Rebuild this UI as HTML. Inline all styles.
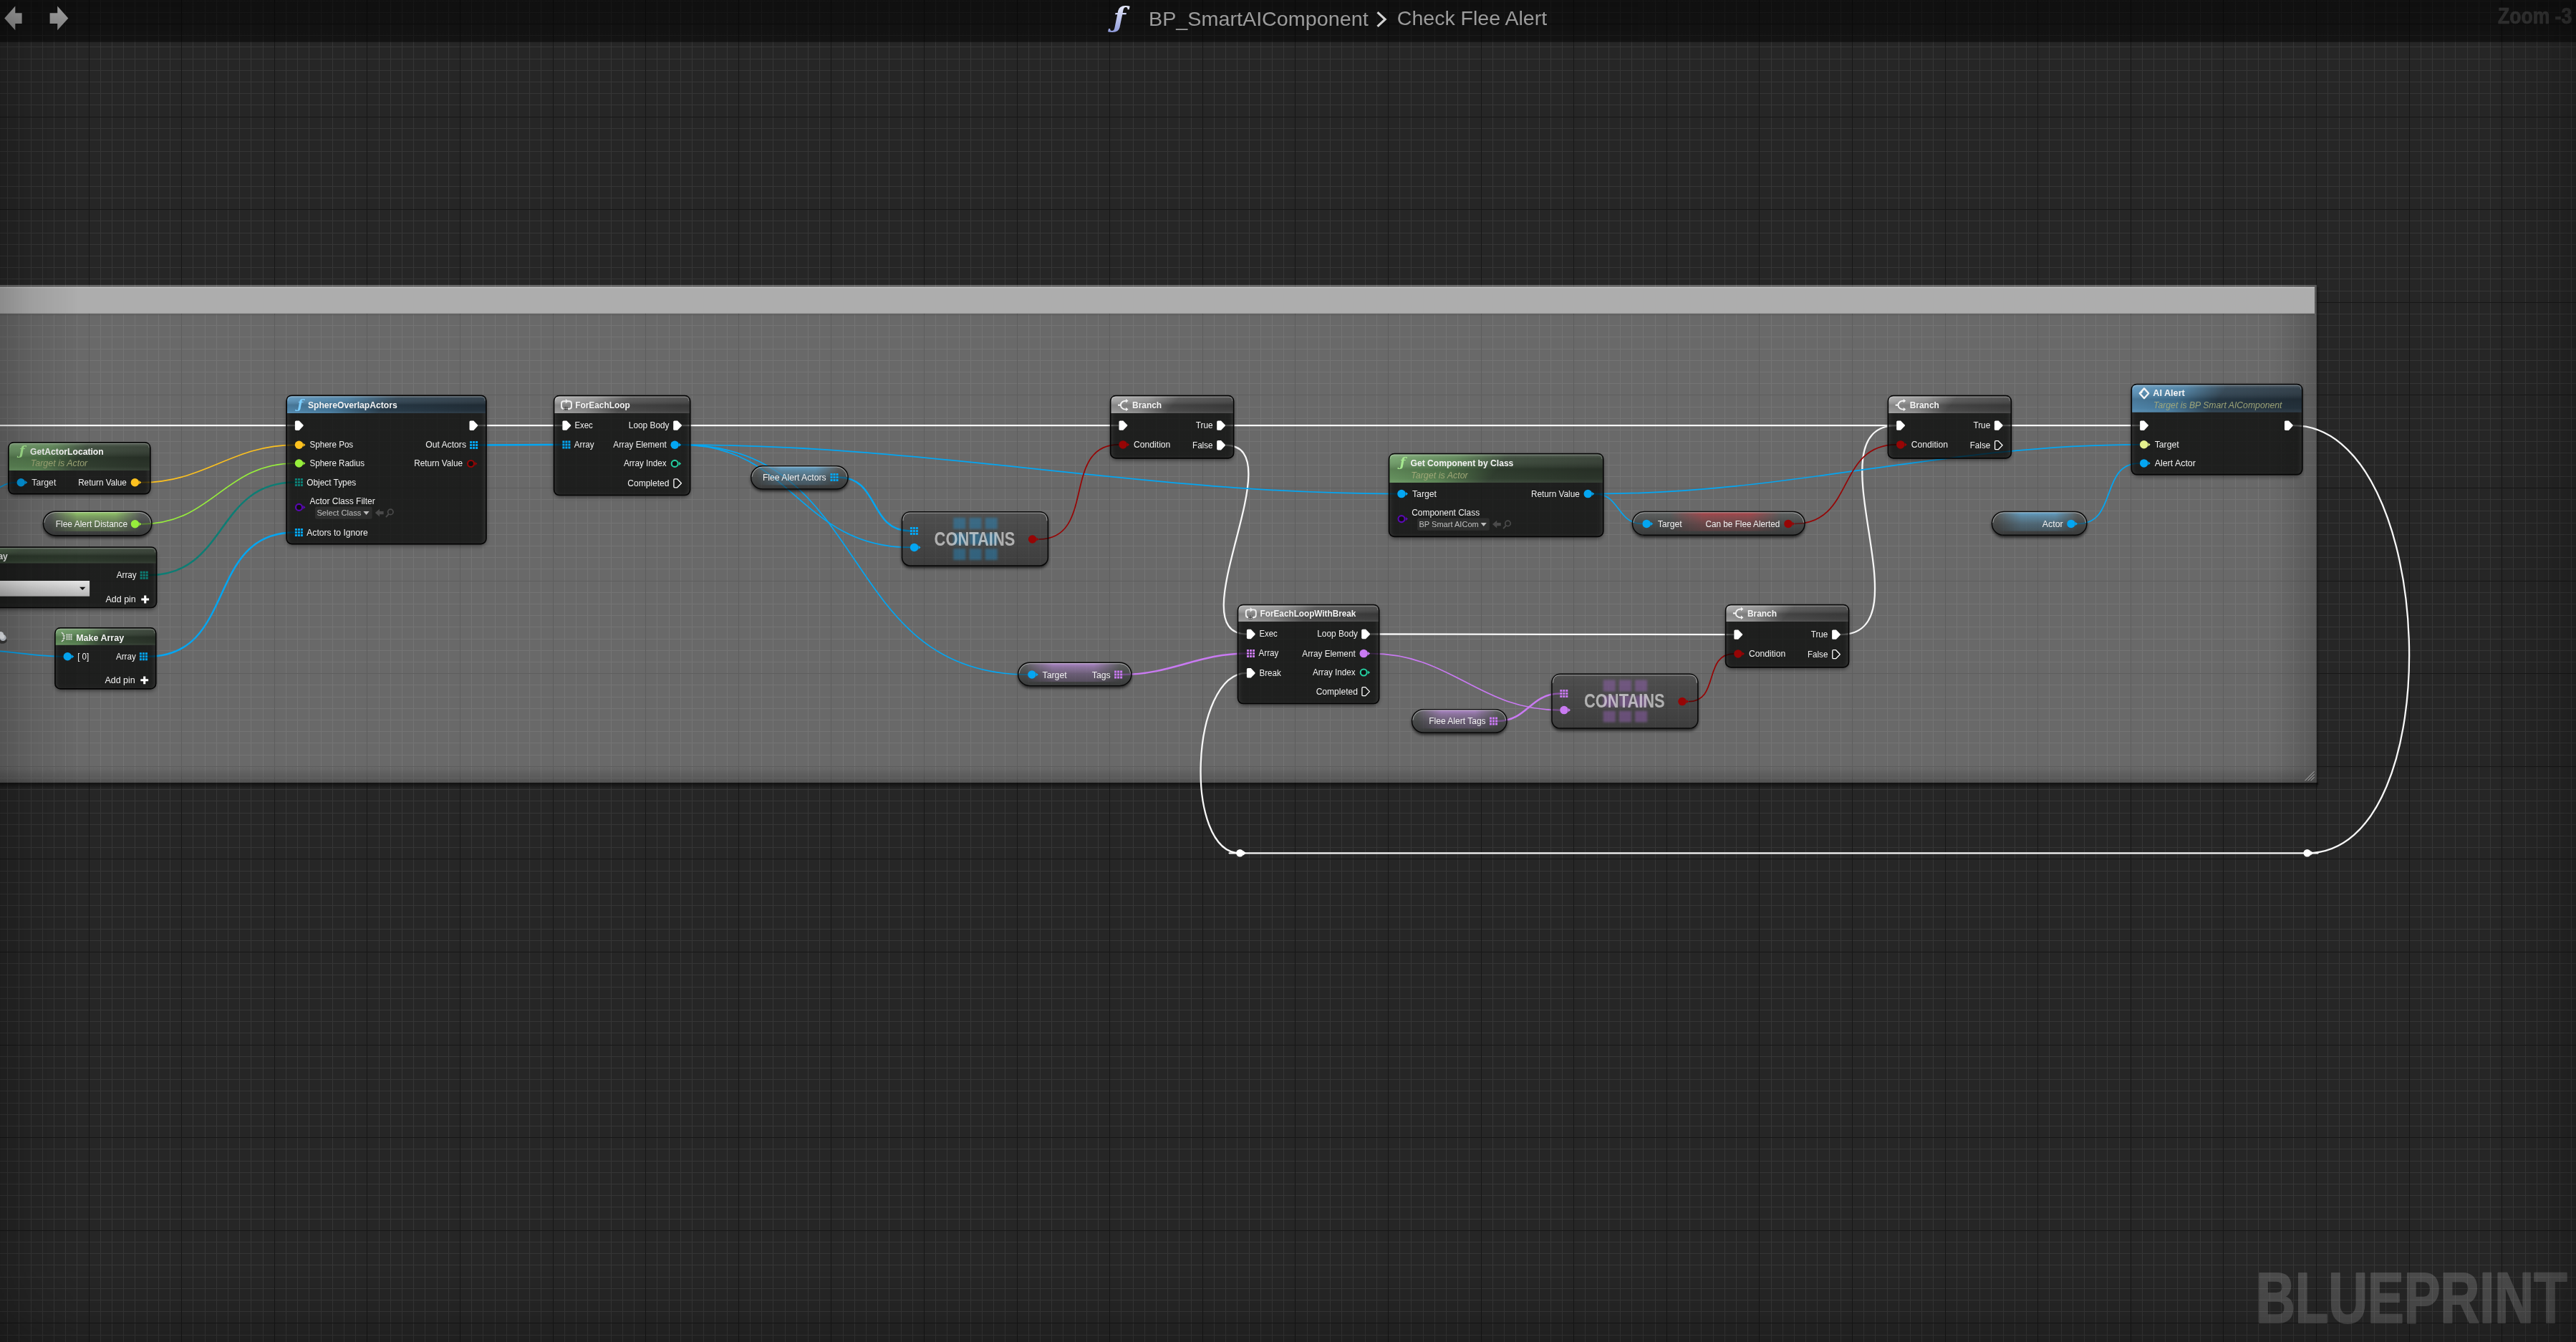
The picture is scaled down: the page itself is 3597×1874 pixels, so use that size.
<!DOCTYPE html>
<html lang="en"><head><meta charset="utf-8"><title>BP_SmartAIComponent - Check Flee Alert</title>
<style>
html,body{margin:0;padding:0;background:#262626;overflow:hidden}
body{width:3597px;height:1874px;position:relative;font-family:"Liberation Sans",sans-serif}
svg{position:absolute;left:0;top:0;display:block}
text{white-space:pre}
</style></head><body>
<svg width="3597" height="1874" viewBox="0 0 3597 1874">
<defs><filter id="blur4" x="-5%" y="-20%" width="110%" height="140%"><feGaussianBlur stdDeviation="3.2"/></filter>
<filter id="blur2" x="-20%" y="-20%" width="140%" height="140%"><feGaussianBlur stdDeviation="1.6"/></filter>
<filter id="blur3" x="-30%" y="-30%" width="160%" height="160%"><feGaussianBlur stdDeviation="2.2"/></filter>
<filter id="blur8" x="-5%" y="-5%" width="110%" height="110%"><feGaussianBlur stdDeviation="5"/></filter>
<linearGradient id="hd-blue" x1="0" y1="0" x2="1" y2="0.11"><stop offset="0" stop-color="#5a94bc"/><stop offset="0.32" stop-color="#487c9f"/><stop offset="0.56" stop-color="#2c404f"/><stop offset="1" stop-color="#26343f"/></linearGradient>
<linearGradient id="hd-green" x1="0" y1="0" x2="1" y2="0.11"><stop offset="0" stop-color="#72a26a"/><stop offset="0.32" stop-color="#5a8353"/><stop offset="0.56" stop-color="#354434"/><stop offset="1" stop-color="#2e382d"/></linearGradient>
<linearGradient id="hd-gray" x1="0" y1="0" x2="1" y2="0.11"><stop offset="0" stop-color="#a8a8a8"/><stop offset="0.32" stop-color="#8c8c8c"/><stop offset="0.56" stop-color="#505050"/><stop offset="1" stop-color="#444444"/></linearGradient>
<linearGradient id="gloss" x1="0" y1="0" x2="0" y2="1"><stop offset="0" stop-color="#fff" stop-opacity="0.20"/><stop offset="0.14" stop-color="#fff" stop-opacity="0.06"/><stop offset="0.52" stop-color="#000" stop-opacity="0.17"/><stop offset="0.86" stop-color="#000" stop-opacity="0.06"/><stop offset="1" stop-color="#fff" stop-opacity="0.04"/></linearGradient>
<linearGradient id="bodyg" x1="0" y1="0" x2="0" y2="1"><stop offset="0" stop-color="#050705" stop-opacity="0.40"/><stop offset="1" stop-color="#050705" stop-opacity="0.40"/></linearGradient>
<linearGradient id="pillg" x1="0" y1="0" x2="0" y2="1"><stop offset="0" stop-color="#5a5d5a"/><stop offset="0.5" stop-color="#434543"/><stop offset="1" stop-color="#363836"/></linearGradient>
<linearGradient id="compg2" x1="0" y1="0" x2="0" y2="1"><stop offset="0" stop-color="#3c3c3c" stop-opacity="0.50"/><stop offset="0.3" stop-color="#0a0a0a" stop-opacity="0.33"/><stop offset="1" stop-color="#000" stop-opacity="0.42"/></linearGradient>
<linearGradient id="compg" x1="0" y1="0" x2="0" y2="1"><stop offset="0" stop-color="#555555"/><stop offset="0.5" stop-color="#474747"/><stop offset="1" stop-color="#3c3c3c"/></linearGradient>
<linearGradient id="cm-sb" x1="0" y1="0" x2="0" y2="1"><stop offset="0" stop-color="#000" stop-opacity="0.55"/><stop offset="1" stop-color="#000" stop-opacity="0"/></linearGradient>
<linearGradient id="cm-sr" x1="0" y1="0" x2="1" y2="0"><stop offset="0" stop-color="#000" stop-opacity="0.35"/><stop offset="1" stop-color="#000" stop-opacity="0"/></linearGradient>
<linearGradient id="cm-r" x1="0" y1="0" x2="1" y2="0"><stop offset="0" stop-color="#000" stop-opacity="0"/><stop offset="1" stop-color="#000" stop-opacity="0.16"/></linearGradient>
<linearGradient id="cm-b" x1="0" y1="0" x2="0" y2="1"><stop offset="0" stop-color="#000" stop-opacity="0"/><stop offset="1" stop-color="#000" stop-opacity="0.22"/></linearGradient>
<linearGradient id="tb" x1="0" y1="0" x2="0" y2="1"><stop offset="0" stop-color="#000" stop-opacity="0.60"/><stop offset="1" stop-color="#000" stop-opacity="0.50"/></linearGradient>
<linearGradient id="arw" x1="0" y1="0" x2="0" y2="1"><stop offset="0" stop-color="#a4a4a4"/><stop offset="1" stop-color="#858585"/></linearGradient>
<linearGradient id="ficon" x1="0" y1="0" x2="0" y2="1"><stop offset="0" stop-color="#f2f4ff"/><stop offset="1" stop-color="#8d99da"/></linearGradient>
<linearGradient id="pillg2" x1="0" y1="0" x2="0" y2="1"><stop offset="0" stop-color="#5a5e5d" stop-opacity="0.56"/><stop offset="0.5" stop-color="#2c3030" stop-opacity="0.56"/><stop offset="1" stop-color="#181a1a" stop-opacity="0.60"/></linearGradient>
<clipPath id="pg1-o"><path clip-rule="evenodd" d="M43.7 697.5H228.6V768.4H43.7ZM77.15 714.1H195.15A16.85 16.85 0 0 1 212 730.95V730.95A16.85 16.85 0 0 1 195.15 747.8H77.15A16.85 16.85 0 0 1 60.3 730.95V730.95A16.85 16.85 0 0 1 77.15 714.1Z"/></clipPath>
<clipPath id="pg1-c"><rect x="61.2" y="715" width="149.9" height="31.9" rx="15.95"/></clipPath>
<linearGradient id="pg1-v" x1="0" y1="0" x2="0" y2="1"><stop offset="0" stop-color="#9ddc6a" stop-opacity="0.85"/><stop offset="0.22" stop-color="#9ddc6a" stop-opacity="0.55"/><stop offset="0.6" stop-color="#9ddc6a" stop-opacity="0.30"/><stop offset="1" stop-color="#9ddc6a" stop-opacity="0.20"/></linearGradient>
<linearGradient id="pg1-h" x1="0" y1="0" x2="1" y2="0"><stop offset="0" stop-color="#fff" stop-opacity="0"/><stop offset="0.30" stop-color="#fff" stop-opacity="1"/><stop offset="0.72" stop-color="#fff" stop-opacity="1"/><stop offset="1" stop-color="#fff" stop-opacity="0"/></linearGradient>
<mask id="pg1-m" maskUnits="userSpaceOnUse" x="68.87" y="713.5" width="128.44" height="34.9"><rect x="68.87" y="713.5" width="128.44" height="34.9" fill="url(#pg1-h)"/></mask>
<linearGradient id="ddg" x1="0" y1="0" x2="0" y2="1"><stop offset="0" stop-color="#e6e6e6"/><stop offset="1" stop-color="#b4b4b4"/></linearGradient>
<clipPath id="pg2-o"><path clip-rule="evenodd" d="M1032 634H1200.8V703.6H1032ZM1064.8 650.6H1168A16.2 16.2 0 0 1 1184.2 666.8V666.8A16.2 16.2 0 0 1 1168 683H1064.8A16.2 16.2 0 0 1 1048.6 666.8V666.8A16.2 16.2 0 0 1 1064.8 650.6Z"/></clipPath>
<clipPath id="pg2-c"><rect x="1049.5" y="651.5" width="133.8" height="30.6" rx="15.3"/></clipPath>
<linearGradient id="pg2-v" x1="0" y1="0" x2="0" y2="1"><stop offset="0" stop-color="#62addb" stop-opacity="0.85"/><stop offset="0.22" stop-color="#62addb" stop-opacity="0.55"/><stop offset="0.6" stop-color="#62addb" stop-opacity="0.30"/><stop offset="1" stop-color="#62addb" stop-opacity="0.20"/></linearGradient>
<linearGradient id="pg2-h" x1="0" y1="0" x2="1" y2="0"><stop offset="0" stop-color="#fff" stop-opacity="0"/><stop offset="0.30" stop-color="#fff" stop-opacity="1"/><stop offset="0.72" stop-color="#fff" stop-opacity="1"/><stop offset="1" stop-color="#fff" stop-opacity="0"/></linearGradient>
<mask id="pg2-m" maskUnits="userSpaceOnUse" x="1056.21" y="650" width="114.91" height="33.6"><rect x="1056.21" y="650" width="114.91" height="33.6" fill="url(#pg2-h)"/></mask>
<clipPath id="cp1-o"><path clip-rule="evenodd" d="M1242.8 698H1480.1V810.7H1242.8ZM1271 714.6H1451.9A11.6 11.6 0 0 1 1463.5 726.2V778.5A11.6 11.6 0 0 1 1451.9 790.1H1271A11.6 11.6 0 0 1 1259.4 778.5V726.2A11.6 11.6 0 0 1 1271 714.6Z"/></clipPath>
<clipPath id="pg3-o"><path clip-rule="evenodd" d="M2262.7 697.8H2536.8V768H2262.7ZM2295.8 714.4H2503.7A16.5 16.5 0 0 1 2520.2 730.9V730.9A16.5 16.5 0 0 1 2503.7 747.4H2295.8A16.5 16.5 0 0 1 2279.3 730.9V730.9A16.5 16.5 0 0 1 2295.8 714.4Z"/></clipPath>
<clipPath id="pg3-c"><rect x="2280.2" y="715.3" width="239.1" height="31.2" rx="15.6"/></clipPath>
<linearGradient id="pg3-v" x1="0" y1="0" x2="0" y2="1"><stop offset="0" stop-color="#b84046" stop-opacity="0.85"/><stop offset="0.22" stop-color="#b84046" stop-opacity="0.55"/><stop offset="0.6" stop-color="#b84046" stop-opacity="0.30"/><stop offset="1" stop-color="#b84046" stop-opacity="0.20"/></linearGradient>
<linearGradient id="pg3-h" x1="0" y1="0" x2="1" y2="0"><stop offset="0" stop-color="#fff" stop-opacity="0"/><stop offset="0.30" stop-color="#fff" stop-opacity="1"/><stop offset="0.72" stop-color="#fff" stop-opacity="1"/><stop offset="1" stop-color="#fff" stop-opacity="0"/></linearGradient>
<mask id="pg3-m" maskUnits="userSpaceOnUse" x="2331.96" y="713.8" width="154.94" height="34.2"><rect x="2331.96" y="713.8" width="154.94" height="34.2" fill="url(#pg3-h)"/></mask>
<clipPath id="pg4-o"><path clip-rule="evenodd" d="M2764.7 697.8H2930.6V768H2764.7ZM2797.8 714.4H2897.5A16.5 16.5 0 0 1 2914 730.9V730.9A16.5 16.5 0 0 1 2897.5 747.4H2797.8A16.5 16.5 0 0 1 2781.3 730.9V730.9A16.5 16.5 0 0 1 2797.8 714.4Z"/></clipPath>
<clipPath id="pg4-c"><rect x="2782.2" y="715.3" width="130.9" height="31.2" rx="15.6"/></clipPath>
<linearGradient id="pg4-v" x1="0" y1="0" x2="0" y2="1"><stop offset="0" stop-color="#62addb" stop-opacity="0.85"/><stop offset="0.22" stop-color="#62addb" stop-opacity="0.55"/><stop offset="0.6" stop-color="#62addb" stop-opacity="0.30"/><stop offset="1" stop-color="#62addb" stop-opacity="0.20"/></linearGradient>
<linearGradient id="pg4-h" x1="0" y1="0" x2="1" y2="0"><stop offset="0" stop-color="#fff" stop-opacity="0"/><stop offset="0.30" stop-color="#fff" stop-opacity="1"/><stop offset="0.72" stop-color="#fff" stop-opacity="1"/><stop offset="1" stop-color="#fff" stop-opacity="0"/></linearGradient>
<mask id="pg4-m" maskUnits="userSpaceOnUse" x="2788.73" y="713.8" width="112.48" height="34.2"><rect x="2788.73" y="713.8" width="112.48" height="34.2" fill="url(#pg4-h)"/></mask>
<clipPath id="pg5-o"><path clip-rule="evenodd" d="M1404.9 908.6H1596.6V978.3H1404.9ZM1437.75 925.2H1563.75A16.25 16.25 0 0 1 1580 941.45V941.45A16.25 16.25 0 0 1 1563.75 957.7H1437.75A16.25 16.25 0 0 1 1421.5 941.45V941.45A16.25 16.25 0 0 1 1437.75 925.2Z"/></clipPath>
<clipPath id="pg5-c"><rect x="1422.4" y="926.1" width="156.7" height="30.7" rx="15.35"/></clipPath>
<linearGradient id="pg5-v" x1="0" y1="0" x2="0" y2="1"><stop offset="0" stop-color="#b98bd8" stop-opacity="0.85"/><stop offset="0.22" stop-color="#b98bd8" stop-opacity="0.55"/><stop offset="0.6" stop-color="#b98bd8" stop-opacity="0.30"/><stop offset="1" stop-color="#b98bd8" stop-opacity="0.20"/></linearGradient>
<linearGradient id="pg5-h" x1="0" y1="0" x2="1" y2="0"><stop offset="0" stop-color="#fff" stop-opacity="0"/><stop offset="0.30" stop-color="#fff" stop-opacity="1"/><stop offset="0.72" stop-color="#fff" stop-opacity="1"/><stop offset="1" stop-color="#fff" stop-opacity="0"/></linearGradient>
<mask id="pg5-m" maskUnits="userSpaceOnUse" x="1430.48" y="924.6" width="134.15" height="33.7"><rect x="1430.48" y="924.6" width="134.15" height="33.7" fill="url(#pg5-h)"/></mask>
<clipPath id="pg6-o"><path clip-rule="evenodd" d="M1954.8 973.9H2120.7V1043.6H1954.8ZM1987.65 990.5H2087.85A16.25 16.25 0 0 1 2104.1 1006.75V1006.75A16.25 16.25 0 0 1 2087.85 1023H1987.65A16.25 16.25 0 0 1 1971.4 1006.75V1006.75A16.25 16.25 0 0 1 1987.65 990.5Z"/></clipPath>
<clipPath id="pg6-c"><rect x="1972.3" y="991.4" width="130.9" height="30.7" rx="15.35"/></clipPath>
<linearGradient id="pg6-v" x1="0" y1="0" x2="0" y2="1"><stop offset="0" stop-color="#b98bd8" stop-opacity="0.85"/><stop offset="0.22" stop-color="#b98bd8" stop-opacity="0.55"/><stop offset="0.6" stop-color="#b98bd8" stop-opacity="0.30"/><stop offset="1" stop-color="#b98bd8" stop-opacity="0.20"/></linearGradient>
<linearGradient id="pg6-h" x1="0" y1="0" x2="1" y2="0"><stop offset="0" stop-color="#fff" stop-opacity="0"/><stop offset="0.30" stop-color="#fff" stop-opacity="1"/><stop offset="0.72" stop-color="#fff" stop-opacity="1"/><stop offset="1" stop-color="#fff" stop-opacity="0"/></linearGradient>
<mask id="pg6-m" maskUnits="userSpaceOnUse" x="1978.83" y="989.9" width="112.48" height="33.7"><rect x="1978.83" y="989.9" width="112.48" height="33.7" fill="url(#pg6-h)"/></mask>
<clipPath id="cp2-o"><path clip-rule="evenodd" d="M2150.2 924.6H2387.6V1037.8H2150.2ZM2178.4 941.2H2359.4A11.6 11.6 0 0 1 2371 952.8V1005.6A11.6 11.6 0 0 1 2359.4 1017.2H2178.4A11.6 11.6 0 0 1 2166.8 1005.6V952.8A11.6 11.6 0 0 1 2178.4 941.2Z"/></clipPath>
<linearGradient id="vl" x1="0" y1="0" x2="1" y2="0"><stop offset="0" stop-color="#000" stop-opacity="0.19"/><stop offset="0.4" stop-color="#000" stop-opacity="0.08"/><stop offset="1" stop-color="#000" stop-opacity="0"/></linearGradient>
<linearGradient id="vr" x1="1" y1="0" x2="0" y2="0"><stop offset="0" stop-color="#000" stop-opacity="0.19"/><stop offset="0.4" stop-color="#000" stop-opacity="0.08"/><stop offset="1" stop-color="#000" stop-opacity="0"/></linearGradient>
<linearGradient id="vb" x1="0" y1="1" x2="0" y2="0"><stop offset="0" stop-color="#000" stop-opacity="0.17"/><stop offset="0.4" stop-color="#000" stop-opacity="0.07"/><stop offset="1" stop-color="#000" stop-opacity="0"/></linearGradient></defs>
<g id="L-bg">
<rect width="3597" height="1874" fill="#262626"/>
<path d="M10.5 0V1874M26.5 0V1874M43.5 0V1874M59.5 0V1874M75.5 0V1874M91.5 0V1874M107.5 0V1874M140.5 0V1874M156.5 0V1874M172.5 0V1874M188.5 0V1874M205.5 0V1874M221.5 0V1874M237.5 0V1874M269.5 0V1874M286.5 0V1874M302.5 0V1874M318.5 0V1874M334.5 0V1874M350.5 0V1874M367.5 0V1874M399.5 0V1874M415.5 0V1874M431.5 0V1874M448.5 0V1874M464.5 0V1874M480.5 0V1874M496.5 0V1874M529.5 0V1874M545.5 0V1874M561.5 0V1874M577.5 0V1874M593.5 0V1874M610.5 0V1874M626.5 0V1874M658.5 0V1874M674.5 0V1874M691.5 0V1874M707.5 0V1874M723.5 0V1874M739.5 0V1874M755.5 0V1874M788.5 0V1874M804.5 0V1874M820.5 0V1874M836.5 0V1874M853.5 0V1874M869.5 0V1874M885.5 0V1874M917.5 0V1874M934.5 0V1874M950.5 0V1874M966.5 0V1874M982.5 0V1874M998.5 0V1874M1015.5 0V1874M1047.5 0V1874M1063.5 0V1874M1079.5 0V1874M1096.5 0V1874M1112.5 0V1874M1128.5 0V1874M1144.5 0V1874M1177.5 0V1874M1193.5 0V1874M1209.5 0V1874M1225.5 0V1874M1241.5 0V1874M1258.5 0V1874M1274.5 0V1874M1306.5 0V1874M1322.5 0V1874M1339.5 0V1874M1355.5 0V1874M1371.5 0V1874M1387.5 0V1874M1403.5 0V1874M1436.5 0V1874M1452.5 0V1874M1468.5 0V1874M1484.5 0V1874M1501.5 0V1874M1517.5 0V1874M1533.5 0V1874M1565.5 0V1874M1582.5 0V1874M1598.5 0V1874M1614.5 0V1874M1630.5 0V1874M1646.5 0V1874M1663.5 0V1874M1695.5 0V1874M1711.5 0V1874M1727.5 0V1874M1744.5 0V1874M1760.5 0V1874M1776.5 0V1874M1792.5 0V1874M1825.5 0V1874M1841.5 0V1874M1857.5 0V1874M1873.5 0V1874M1889.5 0V1874M1906.5 0V1874M1922.5 0V1874M1954.5 0V1874M1970.5 0V1874M1987.5 0V1874M2003.5 0V1874M2019.5 0V1874M2035.5 0V1874M2051.5 0V1874M2084.5 0V1874M2100.5 0V1874M2116.5 0V1874M2132.5 0V1874M2149.5 0V1874M2165.5 0V1874M2181.5 0V1874M2213.5 0V1874M2230.5 0V1874M2246.5 0V1874M2262.5 0V1874M2278.5 0V1874M2294.5 0V1874M2311.5 0V1874M2343.5 0V1874M2359.5 0V1874M2375.5 0V1874M2392.5 0V1874M2408.5 0V1874M2424.5 0V1874M2440.5 0V1874M2473.5 0V1874M2489.5 0V1874M2505.5 0V1874M2521.5 0V1874M2537.5 0V1874M2554.5 0V1874M2570.5 0V1874M2602.5 0V1874M2618.5 0V1874M2635.5 0V1874M2651.5 0V1874M2667.5 0V1874M2683.5 0V1874M2699.5 0V1874M2732.5 0V1874M2748.5 0V1874M2764.5 0V1874M2780.5 0V1874M2797.5 0V1874M2813.5 0V1874M2829.5 0V1874M2861.5 0V1874M2878.5 0V1874M2894.5 0V1874M2910.5 0V1874M2926.5 0V1874M2942.5 0V1874M2959.5 0V1874M2991.5 0V1874M3007.5 0V1874M3023.5 0V1874M3040.5 0V1874M3056.5 0V1874M3072.5 0V1874M3088.5 0V1874M3121.5 0V1874M3137.5 0V1874M3153.5 0V1874M3169.5 0V1874M3185.5 0V1874M3202.5 0V1874M3218.5 0V1874M3250.5 0V1874M3266.5 0V1874M3283.5 0V1874M3299.5 0V1874M3315.5 0V1874M3331.5 0V1874M3347.5 0V1874M3380.5 0V1874M3396.5 0V1874M3412.5 0V1874M3428.5 0V1874M3445.5 0V1874M3461.5 0V1874M3477.5 0V1874M3509.5 0V1874M3526.5 0V1874M3542.5 0V1874M3558.5 0V1874M3574.5 0V1874M3590.5 0V1874M0 1.5H3597M0 17.5H3597M0 49.5H3597M0 65.5H3597M0 82.5H3597M0 98.5H3597M0 114.5H3597M0 130.5H3597M0 146.5H3597M0 179.5H3597M0 195.5H3597M0 211.5H3597M0 227.5H3597M0 244.5H3597M0 260.5H3597M0 276.5H3597M0 308.5H3597M0 325.5H3597M0 341.5H3597M0 357.5H3597M0 373.5H3597M0 389.5H3597M0 406.5H3597M0 438.5H3597M0 454.5H3597M0 470.5H3597M0 487.5H3597M0 503.5H3597M0 519.5H3597M0 535.5H3597M0 568.5H3597M0 584.5H3597M0 600.5H3597M0 616.5H3597M0 632.5H3597M0 649.5H3597M0 665.5H3597M0 697.5H3597M0 713.5H3597M0 730.5H3597M0 746.5H3597M0 762.5H3597M0 778.5H3597M0 794.5H3597M0 827.5H3597M0 843.5H3597M0 859.5H3597M0 875.5H3597M0 892.5H3597M0 908.5H3597M0 924.5H3597M0 956.5H3597M0 973.5H3597M0 989.5H3597M0 1005.5H3597M0 1021.5H3597M0 1037.5H3597M0 1054.5H3597M0 1086.5H3597M0 1102.5H3597M0 1118.5H3597M0 1135.5H3597M0 1151.5H3597M0 1167.5H3597M0 1183.5H3597M0 1216.5H3597M0 1232.5H3597M0 1248.5H3597M0 1264.5H3597M0 1280.5H3597M0 1297.5H3597M0 1313.5H3597M0 1345.5H3597M0 1361.5H3597M0 1378.5H3597M0 1394.5H3597M0 1410.5H3597M0 1426.5H3597M0 1442.5H3597M0 1475.5H3597M0 1491.5H3597M0 1507.5H3597M0 1523.5H3597M0 1540.5H3597M0 1556.5H3597M0 1572.5H3597M0 1604.5H3597M0 1621.5H3597M0 1637.5H3597M0 1653.5H3597M0 1669.5H3597M0 1685.5H3597M0 1702.5H3597M0 1734.5H3597M0 1750.5H3597M0 1766.5H3597M0 1783.5H3597M0 1799.5H3597M0 1815.5H3597M0 1831.5H3597M0 1864.5H3597" stroke="#363636" stroke-width="1" fill="none" shape-rendering="crispEdges"/>
<path d="M124.5 0V1874M253.5 0V1874M383.5 0V1874M512.5 0V1874M642.5 0V1874M772.5 0V1874M901.5 0V1874M1031.5 0V1874M1160.5 0V1874M1290.5 0V1874M1420.5 0V1874M1549.5 0V1874M1679.5 0V1874M1808.5 0V1874M1938.5 0V1874M2068.5 0V1874M2197.5 0V1874M2327.5 0V1874M2456.5 0V1874M2586.5 0V1874M2716.5 0V1874M2845.5 0V1874M2975.5 0V1874M3104.5 0V1874M3234.5 0V1874M3364.5 0V1874M3493.5 0V1874M0 33.5H3597M0 163.5H3597M0 292.5H3597M0 422.5H3597M0 551.5H3597M0 681.5H3597M0 811.5H3597M0 940.5H3597M0 1070.5H3597M0 1199.5H3597M0 1329.5H3597M0 1459.5H3597M0 1588.5H3597M0 1718.5H3597M0 1847.5H3597" stroke="#171717" stroke-width="1" fill="none" shape-rendering="crispEdges"/>
</g>
<g id="L-comment">
<rect x="-5" y="1092.9" width="3241.9" height="9" fill="url(#cm-sb)"/>
<rect x="3234.9" y="400.9" width="5" height="695" fill="url(#cm-sr)"/>
<rect x="-5" y="397.9" width="3239.9" height="695" fill="#fff" fill-opacity="0.31"/>
<rect x="3174.9" y="397.9" width="60" height="695" fill="url(#cm-r)"/>
<rect x="-5" y="1070.9" width="3239.9" height="22" fill="url(#cm-b)"/>
<rect x="-5" y="400.9" width="3237" height="36.9" fill="#adadad"/>
<rect x="-5" y="400.9" width="3237" height="1.2" fill="#c9c9c9"/>
<rect x="-5" y="437.8" width="3237" height="2.5" fill="#000" fill-opacity="0.10"/>
<path d="M3218.5 1090.2L3231.5 1077.2" stroke="#c8c8c8" stroke-width="0.9" stroke-opacity="0.9"/>
<path d="M3222.5 1090.2L3231.5 1081.2" stroke="#c8c8c8" stroke-width="0.9" stroke-opacity="0.9"/>
<path d="M3226.5 1090.2L3231.5 1085.2" stroke="#c8c8c8" stroke-width="0.9" stroke-opacity="0.9"/>
</g>
<g id="L-topbar" opacity="0.999">
<rect x="0" y="0" width="3597" height="58.7" fill="url(#tb)"/>
<path d="M6.2 25.4L21.3 8.5V18.3H30.6V32.9H21.3V42.2Z" fill="url(#arw)"/>
<path d="M95.3 25.4L80.2 8.5V18.3H69.6V32.9H80.2V42.2Z" fill="url(#arw)"/>
<text x="0" y="0" transform="translate(1554.5 37.2) scale(1.1 1)" font-family='"DejaVu Serif", serif' font-size="36.6" font-weight="bold" font-style="italic" fill="url(#ficon)">ƒ</text>
<text x="1604" y="36.2" font-family='"Liberation Sans", sans-serif' font-size="28.46" fill="#9c9c9c" textLength="306.7" lengthAdjust="spacingAndGlyphs">BP_SmartAIComponent</text>
<path d="M1923.5 17.2L1934.2 27L1923.5 36.8" stroke="#d2d2d2" stroke-width="3.1" fill="none" stroke-linejoin="miter"/>
<text x="1950.8" y="34.8" font-family='"Liberation Sans", sans-serif' font-size="28.46" fill="#9c9c9c" textLength="209.3" lengthAdjust="spacingAndGlyphs">Check Flee Alert</text>
<g opacity="0.125"><text x="3488" y="32.6" font-family='"Liberation Sans", sans-serif' font-size="31.01" font-weight="bold" fill="#ffffff" textLength="103.2" lengthAdjust="spacingAndGlyphs" stroke="#fff" stroke-width="0.7">Zoom -3</text></g>
</g>
<g id="L-wires">
<path d="M-40 594.2C110.63 594.2 261.27 594.2 411.9 594.2" fill="none" stroke="#f7f7f7" stroke-width="2.3" stroke-linecap="butt"/>
<path d="M667.5 594.2C706.83 594.2 746.07 594.1 785.4 594.1" fill="none" stroke="#f7f7f7" stroke-width="2.3" stroke-linecap="butt"/>
<path d="M952.2 594.1C1155.63 594.1 1359.07 594.1 1562.5 594.1" fill="none" stroke="#f7f7f7" stroke-width="2.3" stroke-linecap="butt"/>
<path d="M1711.2 594.1C2023.53 594.1 2335.87 594.1 2648.2 594.1" fill="none" stroke="#f7f7f7" stroke-width="2.3" stroke-linecap="butt"/>
<path d="M2796.9 594.1C2860.67 594.1 2924.33 594.2 2988.1 594.2" fill="none" stroke="#f7f7f7" stroke-width="2.3" stroke-linecap="butt"/>
<path d="M1711.2 621.7C1809.03 621.7 1643.07 885.5 1740.9 885.5" fill="none" stroke="#f7f7f7" stroke-width="2.3" stroke-linecap="butt"/>
<path d="M1913.2 885.5C2082.8 885.5 2251.8 886.1 2421.4 886.1" fill="none" stroke="#f7f7f7" stroke-width="2.3" stroke-linecap="butt"/>
<path d="M2570.1 886.1C2693.47 886.1 2524.83 594.1 2648.2 594.1" fill="none" stroke="#f7f7f7" stroke-width="2.3" stroke-linecap="butt"/>
<path d="M3202 594.2C3404.52 594.2 3424.22 1191.3 3221.7 1191.3" fill="none" stroke="#f7f7f7" stroke-width="2.3" stroke-linecap="butt"/>
<path d="M3221.7 1191.3C3421.7 1191.3 1531.4 1191.3 1731.4 1191.3" fill="none" stroke="#f7f7f7" stroke-width="2.3" stroke-linecap="butt"/>
<path d="M1731.4 1191.3C1652.23 1191.3 1661.73 939.8 1740.9 939.8" fill="none" stroke="#f7f7f7" stroke-width="2.3" stroke-linecap="butt"/>
<path d="M-60 728C-14 728 -22.3 673.7 23.7 673.7" fill="none" stroke="#0396dd" stroke-width="1.72" stroke-linecap="butt"/>
<path d="M197.4 673.7C286.37 673.7 322.93 621.3 411.9 621.3" fill="none" stroke="#fcc11f" stroke-width="1.72" stroke-linecap="butt"/>
<path d="M197.5 731.8C297.23 731.8 312.17 647 411.9 647" fill="none" stroke="#97ee3c" stroke-width="1.72" stroke-linecap="butt"/>
<path d="M206.7 803.3C318.33 803.3 300.27 673.6 411.9 673.6" fill="none" stroke="#0d7d74" stroke-width="2.5" stroke-linecap="butt"/>
<path d="M205.9 916.8C332.3 916.8 285.5 743.6 411.9 743.6" fill="none" stroke="#04a6f2" stroke-width="2.5" stroke-linecap="butt"/>
<path d="M-30 908C12.5 908 46.2 916.8 88.7 916.8" fill="none" stroke="#04a6f2" stroke-width="1.72" stroke-linecap="butt"/>
<path d="M667.1 621.5C706.7 621.5 745.8 621 785.4 621" fill="none" stroke="#04a6f2" stroke-width="2.5" stroke-linecap="butt"/>
<path d="M951.2 621.2C1105.53 621.2 1116.67 764.4 1271 764.4" fill="none" stroke="#04a6f2" stroke-width="1.72" stroke-linecap="butt"/>
<path d="M951.2 621.2C1307.4 621.2 1595.2 689.6 1951.4 689.6" fill="none" stroke="#04a6f2" stroke-width="1.72" stroke-linecap="butt"/>
<path d="M951.2 621.2C1219.5 621.2 1167 942 1435.3 942" fill="none" stroke="#04a6f2" stroke-width="1.72" stroke-linecap="butt"/>
<path d="M1170.5 666.4C1228.97 666.4 1212.43 741.4 1270.9 741.4" fill="none" stroke="#04a6f2" stroke-width="2.5" stroke-linecap="butt"/>
<path d="M1450.6 753C1531.93 753 1481.17 620.9 1562.5 620.9" fill="none" stroke="#960505" stroke-width="1.72" stroke-linecap="butt"/>
<path d="M2226.3 689.6C2262.67 689.6 2257.23 731.4 2293.6 731.4" fill="none" stroke="#04a6f2" stroke-width="1.72" stroke-linecap="butt"/>
<path d="M2226.3 689.6C2503.17 689.6 2711.23 620.8 2988.1 620.8" fill="none" stroke="#04a6f2" stroke-width="1.72" stroke-linecap="butt"/>
<path d="M2506 731.4C2590.23 731.4 2563.97 620.9 2648.2 620.9" fill="none" stroke="#960505" stroke-width="1.72" stroke-linecap="butt"/>
<path d="M2901 731.4C2958.2 731.4 2930.9 646.9 2988.1 646.9" fill="none" stroke="#04a6f2" stroke-width="1.72" stroke-linecap="butt"/>
<path d="M1567.1 942C1634.93 942 1673.17 912.4 1741 912.4" fill="none" stroke="#c97af2" stroke-width="2.5" stroke-linecap="butt"/>
<path d="M1913.2 912.6C2027.93 912.6 2063.67 991.6 2178.4 991.6" fill="none" stroke="#c97af2" stroke-width="1.72" stroke-linecap="butt"/>
<path d="M2091 1006.9C2132.87 1006.9 2136.43 968.6 2178.3 968.6" fill="none" stroke="#c97af2" stroke-width="2.5" stroke-linecap="butt"/>
<path d="M2358 979.6C2401.37 979.6 2378.03 912.9 2421.4 912.9" fill="none" stroke="#960505" stroke-width="1.72" stroke-linecap="butt"/>
</g>
<g id="L-shadow">
<g filter="url(#blur4)">
<rect x="12.5" y="621.3" width="196.7" height="70.6" rx="8" fill="#000" fill-opacity="0.55"/>
<rect x="-192.5" y="767.4" width="410.4" height="83.3" rx="8" fill="#000" fill-opacity="0.55"/>
<rect x="77.5" y="880.3" width="139.6" height="83.8" rx="8" fill="#000" fill-opacity="0.55"/>
<rect x="400.7" y="555.7" width="277.6" height="206.1" rx="8" fill="#000" fill-opacity="0.55"/>
<rect x="774.2" y="556" width="188.8" height="137.7" rx="8" fill="#000" fill-opacity="0.55"/>
<rect x="1551.3" y="556" width="170.7" height="86" rx="8" fill="#000" fill-opacity="0.55"/>
<rect x="1940.2" y="637" width="297.9" height="114.5" rx="8" fill="#000" fill-opacity="0.55"/>
<rect x="2637" y="556" width="170.7" height="86" rx="8" fill="#000" fill-opacity="0.55"/>
<rect x="2976.9" y="540" width="237.3" height="124.9" rx="8" fill="#000" fill-opacity="0.55"/>
<rect x="1729.1" y="848" width="195.9" height="136.7" rx="8" fill="#000" fill-opacity="0.55"/>
<rect x="2410.2" y="848" width="170.7" height="86" rx="8" fill="#000" fill-opacity="0.55"/>
</g>
</g>
<g id="L-shadow2">
<g clip-path="url(#pg1-o)"><rect x="60.2" y="716.5" width="151.9" height="34.4" rx="17.45" fill="#000" fill-opacity="0.72" filter="url(#blur3)"/></g>
<g clip-path="url(#pg2-o)"><rect x="1048.5" y="653" width="135.8" height="33.1" rx="16.8" fill="#000" fill-opacity="0.72" filter="url(#blur3)"/></g>
<g clip-path="url(#cp1-o)"><rect x="1259.3" y="717" width="204.3" height="76.2" rx="12.2" fill="#000" fill-opacity="0.72" filter="url(#blur3)"/></g>
<g clip-path="url(#pg3-o)"><rect x="2279.2" y="716.8" width="241.1" height="33.7" rx="17.1" fill="#000" fill-opacity="0.72" filter="url(#blur3)"/></g>
<g clip-path="url(#pg4-o)"><rect x="2781.2" y="716.8" width="132.9" height="33.7" rx="17.1" fill="#000" fill-opacity="0.72" filter="url(#blur3)"/></g>
<g clip-path="url(#pg5-o)"><rect x="1421.4" y="927.6" width="158.7" height="33.2" rx="16.85" fill="#000" fill-opacity="0.72" filter="url(#blur3)"/></g>
<g clip-path="url(#pg6-o)"><rect x="1971.3" y="992.9" width="132.9" height="33.2" rx="16.85" fill="#000" fill-opacity="0.72" filter="url(#blur3)"/></g>
<g clip-path="url(#cp2-o)"><rect x="2166.7" y="943.6" width="204.4" height="76.7" rx="12.2" fill="#000" fill-opacity="0.72" filter="url(#blur3)"/></g>
</g>
<g id="L-nodes">
<rect x="11.9" y="617.9" width="197.9" height="71.8" rx="7.4" fill="url(#bodyg)" stroke="#050505" stroke-width="1.7"/>
<path d="M12.8 657.1V625.2Q12.8 618.8 19.2 618.8H202.5Q208.9 618.8 208.9 625.2V657.1Z" fill="url(#hd-green)"/>
<path d="M12.8 657.1V625.2Q12.8 618.8 19.2 618.8H202.5Q208.9 618.8 208.9 625.2V657.1Z" fill="url(#gloss)"/>
<path d="M13.8 625.3Q13.8 619.6 19.5 619.6H202.2Q207.9 619.6 207.9 625.3" fill="none" stroke="#fff" stroke-opacity="0.22" stroke-width="1"/>
<rect x="60.4" y="714.2" width="151.5" height="33.5" rx="16.75" fill="url(#pillg2)" stroke="#070707" stroke-width="1.4"/>
<g clip-path="url(#pg1-c)"><rect x="68.87" y="715" width="128.44" height="26.87" fill="url(#pg1-v)" mask="url(#pg1-m)"/></g>
<path d="M61.8 729.95A15.35 15.35 0 0 1 77.15 715.6H195.15A15.35 15.35 0 0 1 210.5 729.95" fill="none" stroke="#fff" stroke-opacity="0.45" stroke-width="1.0"/>
<rect x="-193.1" y="764" width="411.6" height="84.5" rx="7.4" fill="url(#bodyg)" stroke="#050505" stroke-width="1.7"/>
<path d="M-192.2 786.5V771.3Q-192.2 764.9 -185.8 764.9H211.2Q217.6 764.9 217.6 771.3V786.5Z" fill="url(#hd-green)"/>
<path d="M-192.2 786.5V771.3Q-192.2 764.9 -185.8 764.9H211.2Q217.6 764.9 217.6 771.3V786.5Z" fill="url(#gloss)"/>
<path d="M-191.2 771.4Q-191.2 765.7 -185.5 765.7H210.9Q216.6 765.7 216.6 771.4" fill="none" stroke="#fff" stroke-opacity="0.22" stroke-width="1"/>
<rect x="76.9" y="876.9" width="140.8" height="85" rx="7.4" fill="url(#bodyg)" stroke="#050505" stroke-width="1.7"/>
<path d="M77.8 900.7V884.2Q77.8 877.8 84.2 877.8H210.4Q216.8 877.8 216.8 884.2V900.7Z" fill="url(#hd-green)"/>
<path d="M77.8 900.7V884.2Q77.8 877.8 84.2 877.8H210.4Q216.8 877.8 216.8 884.2V900.7Z" fill="url(#gloss)"/>
<path d="M78.8 884.3Q78.8 878.6 84.5 878.6H210.1Q215.8 878.6 215.8 884.3" fill="none" stroke="#fff" stroke-opacity="0.22" stroke-width="1"/>
<rect x="400.1" y="552.3" width="278.8" height="207.3" rx="7.4" fill="url(#bodyg)" stroke="#050505" stroke-width="1.7"/>
<path d="M401 577V559.6Q401 553.2 407.4 553.2H671.6Q678 553.2 678 559.6V577Z" fill="url(#hd-blue)"/>
<path d="M401 577V559.6Q401 553.2 407.4 553.2H671.6Q678 553.2 678 559.6V577Z" fill="url(#gloss)"/>
<path d="M402 559.7Q402 554 407.7 554H671.3Q677 554 677 559.7" fill="none" stroke="#fff" stroke-opacity="0.22" stroke-width="1"/>
<rect x="773.6" y="552.6" width="190" height="138.9" rx="7.4" fill="url(#bodyg)" stroke="#050505" stroke-width="1.7"/>
<path d="M774.5 577V559.9Q774.5 553.5 780.9 553.5H956.3Q962.7 553.5 962.7 559.9V577Z" fill="url(#hd-gray)"/>
<path d="M774.5 577V559.9Q774.5 553.5 780.9 553.5H956.3Q962.7 553.5 962.7 559.9V577Z" fill="url(#gloss)"/>
<path d="M775.5 560Q775.5 554.3 781.2 554.3H956Q961.7 554.3 961.7 560" fill="none" stroke="#fff" stroke-opacity="0.22" stroke-width="1"/>
<rect x="1048.7" y="650.7" width="135.4" height="32.2" rx="16.1" fill="url(#pillg2)" stroke="#070707" stroke-width="1.4"/>
<g clip-path="url(#pg2-c)"><rect x="1056.21" y="651.5" width="114.91" height="25.87" fill="url(#pg2-v)" mask="url(#pg2-m)"/></g>
<path d="M1050.1 665.8A14.7 14.7 0 0 1 1064.8 652.1H1168A14.7 14.7 0 0 1 1182.7 665.8" fill="none" stroke="#fff" stroke-opacity="0.45" stroke-width="1.0"/>
<rect x="1259.55" y="714.75" width="203.8" height="75.2" rx="11.45" fill="url(#compg2)" stroke="#070707" stroke-width="1.5"/>
<path d="M1261 727.2Q1261 716.2 1271 716.2H1451.9Q1461.9 716.2 1461.9 727.2" fill="none" stroke="#fff" stroke-opacity="0.42" stroke-width="1.1"/>
<path d="M1331.3 723h17v15.8h-17ZM1331.3 744.6h17v15.8h-17ZM1331.3 766.2h17v15.8h-17ZM1353.5 723h17v15.8h-17ZM1353.5 744.6h17v15.8h-17ZM1353.5 766.2h17v15.8h-17ZM1375.7 723h17v15.8h-17ZM1375.7 744.6h17v15.8h-17ZM1375.7 766.2h17v15.8h-17Z" fill="#1e9fe6" fill-opacity="0.36" filter="url(#blur2)"/>
<rect x="1550.7" y="552.6" width="171.9" height="87.2" rx="7.4" fill="url(#bodyg)" stroke="#050505" stroke-width="1.7"/>
<path d="M1551.6 577V559.9Q1551.6 553.5 1558 553.5H1715.3Q1721.7 553.5 1721.7 559.9V577Z" fill="url(#hd-gray)"/>
<path d="M1551.6 577V559.9Q1551.6 553.5 1558 553.5H1715.3Q1721.7 553.5 1721.7 559.9V577Z" fill="url(#gloss)"/>
<path d="M1552.6 560Q1552.6 554.3 1558.3 554.3H1715Q1720.7 554.3 1720.7 560" fill="none" stroke="#fff" stroke-opacity="0.22" stroke-width="1"/>
<rect x="1939.6" y="633.6" width="299.1" height="115.7" rx="7.4" fill="url(#bodyg)" stroke="#050505" stroke-width="1.7"/>
<path d="M1940.5 674V640.9Q1940.5 634.5 1946.9 634.5H2231.4Q2237.8 634.5 2237.8 640.9V674Z" fill="url(#hd-green)"/>
<path d="M1940.5 674V640.9Q1940.5 634.5 1946.9 634.5H2231.4Q2237.8 634.5 2237.8 640.9V674Z" fill="url(#gloss)"/>
<path d="M1941.5 641Q1941.5 635.3 1947.2 635.3H2231.1Q2236.8 635.3 2236.8 641" fill="none" stroke="#fff" stroke-opacity="0.22" stroke-width="1"/>
<rect x="2279.4" y="714.5" width="240.7" height="32.8" rx="16.4" fill="url(#pillg2)" stroke="#070707" stroke-width="1.4"/>
<g clip-path="url(#pg3-c)"><rect x="2331.96" y="715.3" width="154.94" height="26.33" fill="url(#pg3-v)" mask="url(#pg3-m)"/></g>
<path d="M2280.8 729.9A15 15 0 0 1 2295.8 715.9H2503.7A15 15 0 0 1 2518.7 729.9" fill="none" stroke="#fff" stroke-opacity="0.45" stroke-width="1.0"/>
<rect x="2636.4" y="552.6" width="171.9" height="87.2" rx="7.4" fill="url(#bodyg)" stroke="#050505" stroke-width="1.7"/>
<path d="M2637.3 577V559.9Q2637.3 553.5 2643.7 553.5H2801Q2807.4 553.5 2807.4 559.9V577Z" fill="url(#hd-gray)"/>
<path d="M2637.3 577V559.9Q2637.3 553.5 2643.7 553.5H2801Q2807.4 553.5 2807.4 559.9V577Z" fill="url(#gloss)"/>
<path d="M2638.3 560Q2638.3 554.3 2644 554.3H2800.7Q2806.4 554.3 2806.4 560" fill="none" stroke="#fff" stroke-opacity="0.22" stroke-width="1"/>
<rect x="2976.3" y="536.6" width="238.5" height="126.1" rx="7.4" fill="url(#bodyg)" stroke="#050505" stroke-width="1.7"/>
<path d="M2977.2 575.7V543.9Q2977.2 537.5 2983.6 537.5H3207.5Q3213.9 537.5 3213.9 543.9V575.7Z" fill="url(#hd-blue)"/>
<path d="M2977.2 575.7V543.9Q2977.2 537.5 2983.6 537.5H3207.5Q3213.9 537.5 3213.9 543.9V575.7Z" fill="url(#gloss)"/>
<path d="M2978.2 544Q2978.2 538.3 2983.9 538.3H3207.2Q3212.9 538.3 3212.9 544" fill="none" stroke="#fff" stroke-opacity="0.22" stroke-width="1"/>
<rect x="2781.4" y="714.5" width="132.5" height="32.8" rx="16.4" fill="url(#pillg2)" stroke="#070707" stroke-width="1.4"/>
<g clip-path="url(#pg4-c)"><rect x="2788.73" y="715.3" width="112.48" height="26.33" fill="url(#pg4-v)" mask="url(#pg4-m)"/></g>
<path d="M2782.8 729.9A15 15 0 0 1 2797.8 715.9H2897.5A15 15 0 0 1 2912.5 729.9" fill="none" stroke="#fff" stroke-opacity="0.45" stroke-width="1.0"/>
<rect x="1421.6" y="925.3" width="158.3" height="32.3" rx="16.15" fill="url(#pillg2)" stroke="#070707" stroke-width="1.4"/>
<g clip-path="url(#pg5-c)"><rect x="1430.48" y="926.1" width="134.15" height="25.95" fill="url(#pg5-v)" mask="url(#pg5-m)"/></g>
<path d="M1423 940.45A14.75 14.75 0 0 1 1437.75 926.7H1563.75A14.75 14.75 0 0 1 1578.5 940.45" fill="none" stroke="#fff" stroke-opacity="0.45" stroke-width="1.0"/>
<rect x="1728.5" y="844.6" width="197.1" height="137.9" rx="7.4" fill="url(#bodyg)" stroke="#050505" stroke-width="1.7"/>
<path d="M1729.4 868.1V851.9Q1729.4 845.5 1735.8 845.5H1918.3Q1924.7 845.5 1924.7 851.9V868.1Z" fill="url(#hd-gray)"/>
<path d="M1729.4 868.1V851.9Q1729.4 845.5 1735.8 845.5H1918.3Q1924.7 845.5 1924.7 851.9V868.1Z" fill="url(#gloss)"/>
<path d="M1730.4 852Q1730.4 846.3 1736.1 846.3H1918Q1923.7 846.3 1923.7 852" fill="none" stroke="#fff" stroke-opacity="0.22" stroke-width="1"/>
<rect x="1971.5" y="990.6" width="132.5" height="32.3" rx="16.15" fill="url(#pillg2)" stroke="#070707" stroke-width="1.4"/>
<g clip-path="url(#pg6-c)"><rect x="1978.83" y="991.4" width="112.48" height="25.95" fill="url(#pg6-v)" mask="url(#pg6-m)"/></g>
<path d="M1972.9 1005.75A14.75 14.75 0 0 1 1987.65 992H2087.85A14.75 14.75 0 0 1 2102.6 1005.75" fill="none" stroke="#fff" stroke-opacity="0.45" stroke-width="1.0"/>
<rect x="2166.95" y="941.35" width="203.9" height="75.7" rx="11.45" fill="url(#compg2)" stroke="#070707" stroke-width="1.5"/>
<path d="M2168.4 953.8Q2168.4 942.8 2178.4 942.8H2359.4Q2369.4 942.8 2369.4 953.8" fill="none" stroke="#fff" stroke-opacity="0.42" stroke-width="1.1"/>
<path d="M2238.7 949.6h17v15.8h-17ZM2238.7 971.2h17v15.8h-17ZM2238.7 992.8h17v15.8h-17ZM2260.9 949.6h17v15.8h-17ZM2260.9 971.2h17v15.8h-17ZM2260.9 992.8h17v15.8h-17ZM2283.1 949.6h17v15.8h-17ZM2283.1 971.2h17v15.8h-17ZM2283.1 992.8h17v15.8h-17Z" fill="#b06ad8" fill-opacity="0.36" filter="url(#blur2)"/>
<rect x="2409.6" y="844.6" width="171.9" height="87.2" rx="7.4" fill="url(#bodyg)" stroke="#050505" stroke-width="1.7"/>
<path d="M2410.5 868.1V851.9Q2410.5 845.5 2416.9 845.5H2574.2Q2580.6 845.5 2580.6 851.9V868.1Z" fill="url(#hd-gray)"/>
<path d="M2410.5 868.1V851.9Q2410.5 845.5 2416.9 845.5H2574.2Q2580.6 845.5 2580.6 851.9V868.1Z" fill="url(#gloss)"/>
<path d="M2411.5 852Q2411.5 846.3 2417.2 846.3H2573.9Q2579.6 846.3 2579.6 852" fill="none" stroke="#fff" stroke-opacity="0.22" stroke-width="1"/>
</g>
<g id="L-pins">
<circle cx="29.3" cy="673.7" r="5.75" fill="#0396dd"/><path d="M35.2 671.1L38.3 673.7L35.2 676.3Z" fill="#0396dd"/>
<circle cx="188.4" cy="673.7" r="5.75" fill="#fcc11f"/><path d="M194.3 671.1L197.4 673.7L194.3 676.3Z" fill="#fcc11f"/>
<circle cx="188.5" cy="731.8" r="5.75" fill="#97ee3c"/><path d="M194.4 729.2L197.5 731.8L194.4 734.4Z" fill="#97ee3c"/>
<path d="M195.7 797.8h3v3h-3ZM195.7 801.8h3v3h-3ZM195.7 805.8h3v3h-3ZM199.7 797.8h3v3h-3ZM199.7 801.8h3v3h-3ZM199.7 805.8h3v3h-3ZM203.7 797.8h3v3h-3ZM203.7 801.8h3v3h-3ZM203.7 805.8h3v3h-3Z" fill="#0d7d74"/>
<rect x="-5" y="811" width="130.1" height="21.7" fill="url(#ddg)"/>
<path d="M111 819.7h8.4l-4.2 4.4Z" fill="#111"/>
<path d="M202.7 831.6v10.8M197.3 837.0h10.8" stroke="#fff" stroke-width="3.1" fill="none"/>
<path d="M92.5 885.6h2v2h-2ZM92.5 888.6h2v2h-2ZM92.5 891.6h2v2h-2ZM95.5 885.6h2v2h-2ZM95.5 888.6h2v2h-2ZM95.5 891.6h2v2h-2ZM98.5 885.6h2v2h-2ZM98.5 888.6h2v2h-2ZM98.5 891.6h2v2h-2Z" fill="#e8e8e8"/>
<path d="M86 883.1l3.2 3.2M86 896.1l3.2 -3.2" stroke="#e8e8e8" stroke-width="1.4" fill="none"/>
<path d="M87.2 887.4l3.4 -0.4l-0.4 3.4ZM87.2 891.8l3.4 0.4l-0.4 -3.4Z" fill="#e8e8e8"/>
<circle cx="94.3" cy="916.8" r="5.75" fill="#04a6f2"/><path d="M100.2 914.2L103.3 916.8L100.2 919.4Z" fill="#04a6f2"/>
<path d="M194.9 911.3h3v3h-3ZM194.9 915.3h3v3h-3ZM194.9 919.3h3v3h-3ZM198.9 911.3h3v3h-3ZM198.9 915.3h3v3h-3ZM198.9 919.3h3v3h-3ZM202.9 911.3h3v3h-3ZM202.9 915.3h3v3h-3ZM202.9 919.3h3v3h-3Z" fill="#04a6f2"/>
<path d="M201.7 944.4v10.8M196.3 949.8h10.8" stroke="#fff" stroke-width="3.1" fill="none"/>
<path d="M411.9 589.1Q411.9 587.5 413.5 587.5L417.7 587.5L423.3 593.3Q424.1 594.2 423.3 595.1L417.7 600.9L413.5 600.9Q411.9 600.9 411.9 599.3Z" fill="#fff"/>
<path d="M655.5 589.1Q655.5 587.5 657.1 587.5L661.3 587.5L666.9 593.3Q667.7 594.2 666.9 595.1L661.3 600.9L657.1 600.9Q655.5 600.9 655.5 599.3Z" fill="#fff"/>
<circle cx="417.5" cy="621.3" r="5.75" fill="#fcc11f"/><path d="M423.4 618.7L426.5 621.3L423.4 623.9Z" fill="#fcc11f"/>
<circle cx="417.5" cy="647" r="5.75" fill="#97ee3c"/><path d="M423.4 644.4L426.5 647L423.4 649.6Z" fill="#97ee3c"/>
<path d="M411.9 668.1h3v3h-3ZM411.9 672.1h3v3h-3ZM411.9 676.1h3v3h-3ZM415.9 668.1h3v3h-3ZM415.9 672.1h3v3h-3ZM415.9 676.1h3v3h-3ZM419.9 668.1h3v3h-3ZM419.9 672.1h3v3h-3ZM419.9 676.1h3v3h-3Z" fill="#0d7d74"/>
<circle cx="417.5" cy="708.4" r="4.5" fill="#101010" stroke="#5a08b4" stroke-width="2.1"/><path d="M423.4 705.8L426.5 708.4L423.4 711Z" fill="#5a08b4"/>
<path d="M411.9 738.1h3v3h-3ZM411.9 742.1h3v3h-3ZM411.9 746.1h3v3h-3ZM415.9 738.1h3v3h-3ZM415.9 742.1h3v3h-3ZM415.9 746.1h3v3h-3ZM419.9 738.1h3v3h-3ZM419.9 742.1h3v3h-3ZM419.9 746.1h3v3h-3Z" fill="#04a6f2"/>
<path d="M656.1 616h3v3h-3ZM656.1 620h3v3h-3ZM656.1 624h3v3h-3ZM660.1 616h3v3h-3ZM660.1 620h3v3h-3ZM660.1 624h3v3h-3ZM664.1 616h3v3h-3ZM664.1 620h3v3h-3ZM664.1 624h3v3h-3Z" fill="#04a6f2"/>
<circle cx="657.5" cy="647.5" r="4.5" fill="#101010" stroke="#960505" stroke-width="2.1"/><path d="M663.4 644.9L666.5 647.5L663.4 650.1Z" fill="#960505"/>
<rect x="440" y="707.5" width="79.6" height="17.2" rx="2.5" fill="#3a3a3a" fill-opacity="0.55"/>
<path d="M507.4 714.1h8.2l-4.1 4.8Z" fill="#bdbdbd"/>
<path d="M523.8 716.1l6.2 -5.4v3.2h5.6v4.4h-5.6v3.2Z" fill="#4a4a4a"/>
<circle cx="545.3" cy="714.9" r="3.7" fill="none" stroke="#4a4a4a" stroke-width="1.7"/><path d="M542.9 717.7l-4 4.4" stroke="#4a4a4a" stroke-width="2"/>
<path d="M789.5 560.2H787.2Q784 560.2 784 563.4V567.6Q784 571 787.2 571H787.8" fill="none" stroke="#f0f0f0" stroke-width="1.9" stroke-linecap="round"/>
<path d="M793.2 560.2H794.8Q798 560.2 798 563.4V567.6Q798 571 794.8 571H793.6" fill="none" stroke="#f0f0f0" stroke-width="1.9" stroke-linecap="round"/>
<path d="M789.8 556.9l4 3.3l-4 3.3Z" fill="#f0f0f0"/>
<path d="M787.4 567.8h5.4v5.4h-5.4Z" fill="#222"/>
<path d="M787.75 568.15h1.1v1.1h-1.1ZM787.75 569.95h1.1v1.1h-1.1ZM787.75 571.75h1.1v1.1h-1.1ZM789.55 568.15h1.1v1.1h-1.1ZM789.55 569.95h1.1v1.1h-1.1ZM789.55 571.75h1.1v1.1h-1.1ZM791.35 568.15h1.1v1.1h-1.1ZM791.35 569.95h1.1v1.1h-1.1ZM791.35 571.75h1.1v1.1h-1.1Z" fill="#e8e8e8"/>
<path d="M785.4 589Q785.4 587.4 787 587.4L791.2 587.4L796.8 593.2Q797.6 594.1 796.8 595L791.2 600.8L787 600.8Q785.4 600.8 785.4 599.2Z" fill="#fff"/>
<path d="M785.4 615.5h3v3h-3ZM785.4 619.5h3v3h-3ZM785.4 623.5h3v3h-3ZM789.4 615.5h3v3h-3ZM789.4 619.5h3v3h-3ZM789.4 623.5h3v3h-3ZM793.4 615.5h3v3h-3ZM793.4 619.5h3v3h-3ZM793.4 623.5h3v3h-3Z" fill="#04a6f2"/>
<path d="M940.2 589Q940.2 587.4 941.8 587.4L946 587.4L951.6 593.2Q952.4 594.1 951.6 595L946 600.8L941.8 600.8Q940.2 600.8 940.2 599.2Z" fill="#fff"/>
<circle cx="942.2" cy="621.2" r="5.75" fill="#04a6f2"/><path d="M948.1 618.6L951.2 621.2L948.1 623.8Z" fill="#04a6f2"/>
<circle cx="942.2" cy="647.4" r="4.5" fill="#101010" stroke="#25cda0" stroke-width="2.1"/><path d="M948.1 644.8L951.2 647.4L948.1 650Z" fill="#25cda0"/>
<path d="M940.9 670Q940.9 668.8 942.1 668.8L945.6 668.8L951.4 674.8L945.6 680.8L942.1 680.8Q940.9 680.8 940.9 679.6Z" fill="#0c0c0c" fill-opacity="0.25" stroke="#fff" stroke-width="1.3" stroke-linejoin="round"/>
<path d="M1159.5 660.9h3v3h-3ZM1159.5 664.9h3v3h-3ZM1159.5 668.9h3v3h-3ZM1163.5 660.9h3v3h-3ZM1163.5 664.9h3v3h-3ZM1163.5 668.9h3v3h-3ZM1167.5 660.9h3v3h-3ZM1167.5 664.9h3v3h-3ZM1167.5 668.9h3v3h-3Z" fill="#04a6f2"/>
<path d="M1270.9 735.9h3v3h-3ZM1270.9 739.9h3v3h-3ZM1270.9 743.9h3v3h-3ZM1274.9 735.9h3v3h-3ZM1274.9 739.9h3v3h-3ZM1274.9 743.9h3v3h-3ZM1278.9 735.9h3v3h-3ZM1278.9 739.9h3v3h-3ZM1278.9 743.9h3v3h-3Z" fill="#04a6f2"/>
<circle cx="1276.6" cy="764.4" r="5.75" fill="#04a6f2"/><path d="M1282.5 761.8L1285.6 764.4L1282.5 767Z" fill="#04a6f2"/>
<circle cx="1441.6" cy="753" r="5.75" fill="#960505"/><path d="M1447.5 750.4L1450.6 753L1447.5 755.6Z" fill="#960505"/>
<path d="M1561 565.7H1565.3" fill="none" stroke="#f4f4f4" stroke-width="2.2"/>
<path d="M1572.9 559.8C1568.5 559.4 1564.9 561.7 1564.9 565.7C1564.9 569.7 1568.5 572 1572.9 571.6" fill="none" stroke="#f4f4f4" stroke-width="1.9" stroke-linecap="butt"/>
<path d="M1572.1 557.1l3.4 2.7l-3.4 2.7ZM1572.1 568.9l3.4 2.7l-3.4 2.7Z" fill="#f4f4f4"/>
<path d="M1562.5 589Q1562.5 587.4 1564.1 587.4L1568.3 587.4L1573.9 593.2Q1574.7 594.1 1573.9 595L1568.3 600.8L1564.1 600.8Q1562.5 600.8 1562.5 599.2Z" fill="#fff"/>
<circle cx="1568.1" cy="620.9" r="5.75" fill="#960505"/><path d="M1574 618.3L1577.1 620.9L1574 623.5Z" fill="#960505"/>
<path d="M1699.2 589Q1699.2 587.4 1700.8 587.4L1705 587.4L1710.6 593.2Q1711.4 594.1 1710.6 595L1705 600.8L1700.8 600.8Q1699.2 600.8 1699.2 599.2Z" fill="#fff"/>
<path d="M1699.2 616.6Q1699.2 615 1700.8 615L1705 615L1710.6 620.8Q1711.4 621.7 1710.6 622.6L1705 628.4L1700.8 628.4Q1699.2 628.4 1699.2 626.8Z" fill="#fff"/>
<circle cx="1957" cy="689.6" r="5.75" fill="#04a6f2"/><path d="M1962.9 687L1966 689.6L1962.9 692.2Z" fill="#04a6f2"/>
<circle cx="2217.3" cy="689.6" r="5.75" fill="#04a6f2"/><path d="M2223.2 687L2226.3 689.6L2223.2 692.2Z" fill="#04a6f2"/>
<circle cx="1957" cy="724.6" r="4.5" fill="#101010" stroke="#5a08b4" stroke-width="2.1"/><path d="M1962.9 722L1966 724.6L1962.9 727.2Z" fill="#5a08b4"/>
<rect x="1979" y="723.5" width="100.8" height="17.2" rx="2.5" fill="#3a3a3a" fill-opacity="0.55"/>
<path d="M2067.6 730.1h8.2l-4.1 4.8Z" fill="#bdbdbd"/>
<path d="M2084 732.1l6.2 -5.4v3.2h5.6v4.4h-5.6v3.2Z" fill="#4a4a4a"/>
<circle cx="2105.5" cy="730.9" r="3.7" fill="none" stroke="#4a4a4a" stroke-width="1.7"/><path d="M2103.1 733.7l-4 4.4" stroke="#4a4a4a" stroke-width="2"/>
<circle cx="2299.2" cy="731.4" r="5.75" fill="#04a6f2"/><path d="M2305.1 728.8L2308.2 731.4L2305.1 734Z" fill="#04a6f2"/>
<circle cx="2497" cy="731.4" r="5.75" fill="#960505"/><path d="M2502.9 728.8L2506 731.4L2502.9 734Z" fill="#960505"/>
<path d="M2646.7 565.7H2651" fill="none" stroke="#f4f4f4" stroke-width="2.2"/>
<path d="M2658.6 559.8C2654.2 559.4 2650.6 561.7 2650.6 565.7C2650.6 569.7 2654.2 572 2658.6 571.6" fill="none" stroke="#f4f4f4" stroke-width="1.9" stroke-linecap="butt"/>
<path d="M2657.8 557.1l3.4 2.7l-3.4 2.7ZM2657.8 568.9l3.4 2.7l-3.4 2.7Z" fill="#f4f4f4"/>
<path d="M2648.2 589Q2648.2 587.4 2649.8 587.4L2654 587.4L2659.6 593.2Q2660.4 594.1 2659.6 595L2654 600.8L2649.8 600.8Q2648.2 600.8 2648.2 599.2Z" fill="#fff"/>
<circle cx="2653.8" cy="620.9" r="5.75" fill="#960505"/><path d="M2659.7 618.3L2662.8 620.9L2659.7 623.5Z" fill="#960505"/>
<path d="M2784.9 589Q2784.9 587.4 2786.5 587.4L2790.7 587.4L2796.3 593.2Q2797.1 594.1 2796.3 595L2790.7 600.8L2786.5 600.8Q2784.9 600.8 2784.9 599.2Z" fill="#fff"/>
<path d="M2785.6 616.9Q2785.6 615.7 2786.8 615.7L2790.3 615.7L2796.1 621.7L2790.3 627.7L2786.8 627.7Q2785.6 627.7 2785.6 626.5Z" fill="#0c0c0c" fill-opacity="0.25" stroke="#fff" stroke-width="1.3" stroke-linejoin="round"/>
<path d="M2994 542.4L3000.2 549.3L2994 556.2L2987.8 549.3Z" fill="none" stroke="#f4f4f4" stroke-width="2.4" stroke-linejoin="round"/>
<path d="M2987.6 549.3L2993.6 542.5L2991 549.3Z" fill="#f4f4f4"/>
<path d="M2988.1 589.1Q2988.1 587.5 2989.7 587.5L2993.9 587.5L2999.5 593.3Q3000.3 594.2 2999.5 595.1L2993.9 600.9L2989.7 600.9Q2988.1 600.9 2988.1 599.3Z" fill="#fff"/>
<path d="M3190 589.1Q3190 587.5 3191.6 587.5L3195.8 587.5L3201.4 593.3Q3202.2 594.2 3201.4 595.1L3195.8 600.9L3191.6 600.9Q3190 600.9 3190 599.3Z" fill="#fff"/>
<circle cx="2993.7" cy="620.8" r="5.75" fill="#e5f18e"/><path d="M2999.6 618.2L3002.7 620.8L2999.6 623.4Z" fill="#e5f18e"/>
<circle cx="2993.7" cy="646.9" r="5.75" fill="#04a6f2"/><path d="M2999.6 644.3L3002.7 646.9L2999.6 649.5Z" fill="#04a6f2"/>
<circle cx="2892" cy="731.4" r="5.75" fill="#04a6f2"/><path d="M2897.9 728.8L2901 731.4L2897.9 734Z" fill="#04a6f2"/>
<circle cx="1440.9" cy="942" r="5.75" fill="#04a6f2"/><path d="M1446.8 939.4L1449.9 942L1446.8 944.6Z" fill="#04a6f2"/>
<path d="M1556.1 936.5h3v3h-3ZM1556.1 940.5h3v3h-3ZM1556.1 944.5h3v3h-3ZM1560.1 936.5h3v3h-3ZM1560.1 940.5h3v3h-3ZM1560.1 944.5h3v3h-3ZM1564.1 936.5h3v3h-3ZM1564.1 940.5h3v3h-3ZM1564.1 944.5h3v3h-3Z" fill="#c97af2"/>
<path d="M1745.3 851.4H1743Q1739.8 851.4 1739.8 854.6V858.8Q1739.8 862.2 1743 862.2H1743.6" fill="none" stroke="#f0f0f0" stroke-width="1.9" stroke-linecap="round"/>
<path d="M1749 851.4H1750.6Q1753.8 851.4 1753.8 854.6V858.8Q1753.8 862.2 1750.6 862.2H1749.4" fill="none" stroke="#f0f0f0" stroke-width="1.9" stroke-linecap="round"/>
<path d="M1745.6 848.1l4 3.3l-4 3.3Z" fill="#f0f0f0"/>
<path d="M1743.2 859h5.4v5.4h-5.4Z" fill="#222"/>
<path d="M1743.55 859.35h1.1v1.1h-1.1ZM1743.55 861.15h1.1v1.1h-1.1ZM1743.55 862.95h1.1v1.1h-1.1ZM1745.35 859.35h1.1v1.1h-1.1ZM1745.35 861.15h1.1v1.1h-1.1ZM1745.35 862.95h1.1v1.1h-1.1ZM1747.15 859.35h1.1v1.1h-1.1ZM1747.15 861.15h1.1v1.1h-1.1ZM1747.15 862.95h1.1v1.1h-1.1Z" fill="#e8e8e8"/>
<path d="M1740.9 880.4Q1740.9 878.8 1742.5 878.8L1746.7 878.8L1752.3 884.6Q1753.1 885.5 1752.3 886.4L1746.7 892.2L1742.5 892.2Q1740.9 892.2 1740.9 890.6Z" fill="#fff"/>
<path d="M1741 906.9h3v3h-3ZM1741 910.9h3v3h-3ZM1741 914.9h3v3h-3ZM1745 906.9h3v3h-3ZM1745 910.9h3v3h-3ZM1745 914.9h3v3h-3ZM1749 906.9h3v3h-3ZM1749 910.9h3v3h-3ZM1749 914.9h3v3h-3Z" fill="#c97af2"/>
<path d="M1740.9 934.7Q1740.9 933.1 1742.5 933.1L1746.7 933.1L1752.3 938.9Q1753.1 939.8 1752.3 940.7L1746.7 946.5L1742.5 946.5Q1740.9 946.5 1740.9 944.9Z" fill="#fff"/>
<path d="M1901.2 880.4Q1901.2 878.8 1902.8 878.8L1907 878.8L1912.6 884.6Q1913.4 885.5 1912.6 886.4L1907 892.2L1902.8 892.2Q1901.2 892.2 1901.2 890.6Z" fill="#fff"/>
<circle cx="1904.2" cy="912.6" r="5.75" fill="#c97af2"/><path d="M1910.1 910L1913.2 912.6L1910.1 915.2Z" fill="#c97af2"/>
<circle cx="1904.2" cy="939" r="4.5" fill="#101010" stroke="#25cda0" stroke-width="2.1"/><path d="M1910.1 936.4L1913.2 939L1910.1 941.6Z" fill="#25cda0"/>
<path d="M1901.9 960.8Q1901.9 959.6 1903.1 959.6L1906.6 959.6L1912.4 965.6L1906.6 971.6L1903.1 971.6Q1901.9 971.6 1901.9 970.4Z" fill="#0c0c0c" fill-opacity="0.25" stroke="#fff" stroke-width="1.3" stroke-linejoin="round"/>
<path d="M2080 1001.4h3v3h-3ZM2080 1005.4h3v3h-3ZM2080 1009.4h3v3h-3ZM2084 1001.4h3v3h-3ZM2084 1005.4h3v3h-3ZM2084 1009.4h3v3h-3ZM2088 1001.4h3v3h-3ZM2088 1005.4h3v3h-3ZM2088 1009.4h3v3h-3Z" fill="#c97af2"/>
<path d="M2178.3 963.1h3v3h-3ZM2178.3 967.1h3v3h-3ZM2178.3 971.1h3v3h-3ZM2182.3 963.1h3v3h-3ZM2182.3 967.1h3v3h-3ZM2182.3 971.1h3v3h-3ZM2186.3 963.1h3v3h-3ZM2186.3 967.1h3v3h-3ZM2186.3 971.1h3v3h-3Z" fill="#c97af2"/>
<circle cx="2184" cy="991.6" r="5.75" fill="#c97af2"/><path d="M2189.9 989L2193 991.6L2189.9 994.2Z" fill="#c97af2"/>
<circle cx="2349" cy="979.6" r="5.75" fill="#960505"/><path d="M2354.9 977L2358 979.6L2354.9 982.2Z" fill="#960505"/>
<path d="M2419.9 856.4H2424.2" fill="none" stroke="#f4f4f4" stroke-width="2.2"/>
<path d="M2431.8 850.5C2427.4 850.1 2423.8 852.4 2423.8 856.4C2423.8 860.4 2427.4 862.7 2431.8 862.3" fill="none" stroke="#f4f4f4" stroke-width="1.9" stroke-linecap="butt"/>
<path d="M2431 847.8l3.4 2.7l-3.4 2.7ZM2431 859.6l3.4 2.7l-3.4 2.7Z" fill="#f4f4f4"/>
<path d="M2421.4 881Q2421.4 879.4 2423 879.4L2427.2 879.4L2432.8 885.2Q2433.6 886.1 2432.8 887L2427.2 892.8L2423 892.8Q2421.4 892.8 2421.4 891.2Z" fill="#fff"/>
<circle cx="2427" cy="912.9" r="5.75" fill="#960505"/><path d="M2432.9 910.3L2436 912.9L2432.9 915.5Z" fill="#960505"/>
<path d="M2558.1 881Q2558.1 879.4 2559.7 879.4L2563.9 879.4L2569.5 885.2Q2570.3 886.1 2569.5 887L2563.9 892.8L2559.7 892.8Q2558.1 892.8 2558.1 891.2Z" fill="#fff"/>
<path d="M2558.8 908.9Q2558.8 907.7 2560 907.7L2563.5 907.7L2569.3 913.7L2563.5 919.7L2560 919.7Q2558.8 919.7 2558.8 918.5Z" fill="#0c0c0c" fill-opacity="0.25" stroke="#fff" stroke-width="1.3" stroke-linejoin="round"/>
<circle cx="1731.4" cy="1191.3" r="5.3" fill="#fff"/><path d="M1736 1188.1L1740 1191.3L1736 1194.5Z" fill="#fff"/>
<circle cx="3221.7" cy="1191.3" r="5.3" fill="#fff"/><path d="M3226.3 1188.1L3230.3 1191.3L3226.3 1194.5Z" fill="#fff"/>
<ellipse cx="3.2" cy="894.6" rx="6.6" ry="4.2" fill="#2a2a2a" fill-opacity="0.75"/><circle cx="0.6" cy="886.6" r="4.6" fill="#e9edf2"/><circle cx="4.2" cy="890.6" r="4.5" fill="#cdd3db"/><circle cx="3.0" cy="889.0" r="3.2" fill="#f1f4f8"/>
</g>
<g id="L-text" opacity="0.999">
<text x="42" y="634.5" font-family='"Liberation Sans", sans-serif' font-size="13.26" font-weight="bold" fill="#f4f4f4" textLength="102.73" lengthAdjust="spacingAndGlyphs">GetActorLocation</text>
<text x="42.8" y="651.4" font-family='"Liberation Sans", sans-serif' font-size="12.85" font-style="italic" fill="#a7ad7c" fill-opacity="0.92" textLength="79.44" lengthAdjust="spacingAndGlyphs">Target is Actor</text>
<text x="0" y="0" transform="translate(27.1 635.4) scale(1.08 1)" font-family='"DejaVu Serif", serif' font-size="16.5" font-weight="bold" font-style="italic" fill="#a6e890">ƒ</text>
<text x="44.3" y="677.6" font-family='"Liberation Sans", sans-serif' font-size="12.24" fill="#f2f2f2" textLength="34.01" lengthAdjust="spacingAndGlyphs">Target</text>
<text x="109.13" y="677.6" font-family='"Liberation Sans", sans-serif' font-size="12.24" fill="#f2f2f2" textLength="67.77" lengthAdjust="spacingAndGlyphs">Return Value</text>
<text x="77.76" y="736.3" font-family='"Liberation Sans", sans-serif' font-size="12.24" fill="#f2f2f2" textLength="100.34" lengthAdjust="spacingAndGlyphs">Flee Alert Distance</text>
<text x="-2.6" y="780.5" font-family='"Liberation Sans", sans-serif' font-size="13.26" font-weight="bold" fill="#f4f4f4" textLength="13.41" lengthAdjust="spacingAndGlyphs">ay</text>
<text x="162.76" y="807.2" font-family='"Liberation Sans", sans-serif' font-size="12.24" fill="#f2f2f2" textLength="27.84" lengthAdjust="spacingAndGlyphs">Array</text>
<text x="147.48" y="841" font-family='"Liberation Sans", sans-serif' font-size="12.75" fill="#f2f2f2" textLength="42.32" lengthAdjust="spacingAndGlyphs">Add pin</text>
<text x="106.2" y="894.6" font-family='"Liberation Sans", sans-serif' font-size="13.26" font-weight="bold" fill="#f4f4f4" textLength="66.91" lengthAdjust="spacingAndGlyphs">Make Array</text>
<text x="108.2" y="920.7" font-family='"Liberation Sans", sans-serif' font-size="12.24" fill="#f2f2f2" textLength="16.08" lengthAdjust="spacingAndGlyphs">[ 0]</text>
<text x="161.96" y="920.7" font-family='"Liberation Sans", sans-serif' font-size="12.24" fill="#f2f2f2" textLength="27.84" lengthAdjust="spacingAndGlyphs">Array</text>
<text x="146.38" y="953.9" font-family='"Liberation Sans", sans-serif' font-size="12.75" fill="#f2f2f2" textLength="42.32" lengthAdjust="spacingAndGlyphs">Add pin</text>
<text x="429.9" y="570" font-family='"Liberation Sans", sans-serif' font-size="13.26" font-weight="bold" fill="#f4f4f4" textLength="124.79" lengthAdjust="spacingAndGlyphs">SphereOverlapActors</text>
<text x="0" y="0" transform="translate(415.5 569.5) scale(1.08 1)" font-family='"DejaVu Serif", serif' font-size="16.5" font-weight="bold" font-style="italic" fill="#7dcfff">ƒ</text>
<text x="432.5" y="625.2" font-family='"Liberation Sans", sans-serif' font-size="12.24" fill="#f2f2f2" textLength="60.66" lengthAdjust="spacingAndGlyphs">Sphere Pos</text>
<text x="432.5" y="650.9" font-family='"Liberation Sans", sans-serif' font-size="12.24" fill="#f2f2f2" textLength="76.55" lengthAdjust="spacingAndGlyphs">Sphere Radius</text>
<text x="428.3" y="677.5" font-family='"Liberation Sans", sans-serif' font-size="12.24" fill="#f2f2f2" textLength="68.89" lengthAdjust="spacingAndGlyphs">Object Types</text>
<text x="432.5" y="703.5" font-family='"Liberation Sans", sans-serif' font-size="12.24" fill="#f2f2f2" textLength="91.25" lengthAdjust="spacingAndGlyphs">Actor Class Filter</text>
<text x="428.3" y="747.5" font-family='"Liberation Sans", sans-serif' font-size="12.24" fill="#f2f2f2" textLength="85.42" lengthAdjust="spacingAndGlyphs">Actors to Ignore</text>
<text x="594.2" y="625.4" font-family='"Liberation Sans", sans-serif' font-size="12.24" fill="#f2f2f2" textLength="56.8" lengthAdjust="spacingAndGlyphs">Out Actors</text>
<text x="578.23" y="651.4" font-family='"Liberation Sans", sans-serif' font-size="12.24" fill="#f2f2f2" textLength="67.77" lengthAdjust="spacingAndGlyphs">Return Value</text>
<text x="442.4" y="719.7" font-family='"Liberation Sans", sans-serif' font-size="11.58" fill="#cfcfcf" fill-opacity="0.9" textLength="62.04" lengthAdjust="spacingAndGlyphs">Select Class</text>
<text x="803.2" y="570.3" font-family='"Liberation Sans", sans-serif' font-size="13.26" font-weight="bold" fill="#f4f4f4" textLength="76.5" lengthAdjust="spacingAndGlyphs">ForEachLoop</text>
<text x="802.5" y="598" font-family='"Liberation Sans", sans-serif' font-size="12.24" fill="#f2f2f2" textLength="25.3" lengthAdjust="spacingAndGlyphs">Exec</text>
<text x="801.8" y="624.9" font-family='"Liberation Sans", sans-serif' font-size="12.24" fill="#f2f2f2" textLength="27.84" lengthAdjust="spacingAndGlyphs">Array</text>
<text x="877.87" y="598" font-family='"Liberation Sans", sans-serif' font-size="12.24" fill="#f2f2f2" textLength="56.63" lengthAdjust="spacingAndGlyphs">Loop Body</text>
<text x="856.34" y="625.1" font-family='"Liberation Sans", sans-serif' font-size="12.24" fill="#f2f2f2" textLength="74.36" lengthAdjust="spacingAndGlyphs">Array Element</text>
<text x="870.9" y="651.3" font-family='"Liberation Sans", sans-serif' font-size="12.24" fill="#f2f2f2" textLength="59.8" lengthAdjust="spacingAndGlyphs">Array Index</text>
<text x="876.24" y="678.7" font-family='"Liberation Sans", sans-serif' font-size="12.24" fill="#f2f2f2" textLength="58.26" lengthAdjust="spacingAndGlyphs">Completed</text>
<text x="1064.95" y="670.9" font-family='"Liberation Sans", sans-serif' font-size="12.24" fill="#f2f2f2" textLength="88.65" lengthAdjust="spacingAndGlyphs">Flee Alert Actors</text>
<text x="1304.6" y="761.6" font-family='"Liberation Sans", sans-serif' font-size="27.54" font-weight="bold" fill="#ffffff" fill-opacity="0.58" textLength="112.7" lengthAdjust="spacingAndGlyphs">CONTAINS</text>
<text x="1581" y="570.3" font-family='"Liberation Sans", sans-serif' font-size="13.26" font-weight="bold" fill="#f4f4f4" textLength="41.17" lengthAdjust="spacingAndGlyphs">Branch</text>
<text x="1583.1" y="624.8" font-family='"Liberation Sans", sans-serif' font-size="12.24" fill="#f2f2f2" textLength="51.28" lengthAdjust="spacingAndGlyphs">Condition</text>
<text x="1669.73" y="598" font-family='"Liberation Sans", sans-serif' font-size="12.24" fill="#f2f2f2" textLength="23.77" lengthAdjust="spacingAndGlyphs">True</text>
<text x="1665.06" y="625.6" font-family='"Liberation Sans", sans-serif' font-size="12.24" fill="#f2f2f2" textLength="28.44" lengthAdjust="spacingAndGlyphs">False</text>
<text x="1969.5" y="650.8" font-family='"Liberation Sans", sans-serif' font-size="13.26" font-weight="bold" fill="#f4f4f4" textLength="143.85" lengthAdjust="spacingAndGlyphs">Get Component by Class</text>
<text x="1970.3" y="667.7" font-family='"Liberation Sans", sans-serif' font-size="12.85" font-style="italic" fill="#a7ad7c" fill-opacity="0.92" textLength="79.44" lengthAdjust="spacingAndGlyphs">Target is Actor</text>
<text x="0" y="0" transform="translate(1954.8 650.9) scale(1.08 1)" font-family='"DejaVu Serif", serif' font-size="16.5" font-weight="bold" font-style="italic" fill="#a6e890">ƒ</text>
<text x="1972" y="693.5" font-family='"Liberation Sans", sans-serif' font-size="12.24" fill="#f2f2f2" textLength="34.01" lengthAdjust="spacingAndGlyphs">Target</text>
<text x="2138.03" y="693.5" font-family='"Liberation Sans", sans-serif' font-size="12.24" fill="#f2f2f2" textLength="67.77" lengthAdjust="spacingAndGlyphs">Return Value</text>
<text x="1971.2" y="719.6" font-family='"Liberation Sans", sans-serif' font-size="12.24" fill="#f2f2f2" textLength="94.92" lengthAdjust="spacingAndGlyphs">Component Class</text>
<text x="1981.4" y="735.7" font-family='"Liberation Sans", sans-serif' font-size="11.58" fill="#cfcfcf" fill-opacity="0.9" textLength="83.4" lengthAdjust="spacingAndGlyphs">BP Smart AICom</text>
<text x="2314.7" y="735.9" font-family='"Liberation Sans", sans-serif' font-size="12.24" fill="#f2f2f2" textLength="34.01" lengthAdjust="spacingAndGlyphs">Target</text>
<text x="2381.5" y="735.9" font-family='"Liberation Sans", sans-serif' font-size="12.24" fill="#f2f2f2" textLength="103.8" lengthAdjust="spacingAndGlyphs">Can be Flee Alerted</text>
<text x="2666.7" y="570.3" font-family='"Liberation Sans", sans-serif' font-size="13.26" font-weight="bold" fill="#f4f4f4" textLength="41.17" lengthAdjust="spacingAndGlyphs">Branch</text>
<text x="2668.8" y="624.8" font-family='"Liberation Sans", sans-serif' font-size="12.24" fill="#f2f2f2" textLength="51.28" lengthAdjust="spacingAndGlyphs">Condition</text>
<text x="2755.43" y="598" font-family='"Liberation Sans", sans-serif' font-size="12.24" fill="#f2f2f2" textLength="23.77" lengthAdjust="spacingAndGlyphs">True</text>
<text x="2750.76" y="625.6" font-family='"Liberation Sans", sans-serif' font-size="12.24" fill="#f2f2f2" textLength="28.44" lengthAdjust="spacingAndGlyphs">False</text>
<text x="3006.3" y="553.2" font-family='"Liberation Sans", sans-serif' font-size="13.26" font-weight="bold" fill="#f4f4f4" textLength="44.47" lengthAdjust="spacingAndGlyphs">AI Alert</text>
<text x="3007.1" y="570.1" font-family='"Liberation Sans", sans-serif' font-size="12.85" font-style="italic" fill="#a7ad7c" fill-opacity="0.92" textLength="179.42" lengthAdjust="spacingAndGlyphs">Target is BP Smart AIComponent</text>
<text x="3008.7" y="624.7" font-family='"Liberation Sans", sans-serif' font-size="12.24" fill="#f2f2f2" textLength="34.01" lengthAdjust="spacingAndGlyphs">Target</text>
<text x="3008.7" y="650.8" font-family='"Liberation Sans", sans-serif' font-size="12.24" fill="#f2f2f2" textLength="57.2" lengthAdjust="spacingAndGlyphs">Alert Actor</text>
<text x="2851.87" y="735.9" font-family='"Liberation Sans", sans-serif' font-size="12.24" fill="#f2f2f2" textLength="28.83" lengthAdjust="spacingAndGlyphs">Actor</text>
<text x="1455.6" y="946.5" font-family='"Liberation Sans", sans-serif' font-size="12.24" fill="#f2f2f2" textLength="34.01" lengthAdjust="spacingAndGlyphs">Target</text>
<text x="1524.74" y="946.5" font-family='"Liberation Sans", sans-serif' font-size="12.24" fill="#f2f2f2" textLength="25.96" lengthAdjust="spacingAndGlyphs">Tags</text>
<text x="1759.6" y="861" font-family='"Liberation Sans", sans-serif' font-size="13.26" font-weight="bold" fill="#f4f4f4" textLength="133.8" lengthAdjust="spacingAndGlyphs">ForEachLoopWithBreak</text>
<text x="1758.4" y="889.4" font-family='"Liberation Sans", sans-serif' font-size="12.24" fill="#f2f2f2" textLength="25.3" lengthAdjust="spacingAndGlyphs">Exec</text>
<text x="1757.6" y="916.3" font-family='"Liberation Sans", sans-serif' font-size="12.24" fill="#f2f2f2" textLength="27.84" lengthAdjust="spacingAndGlyphs">Array</text>
<text x="1758.4" y="943.7" font-family='"Liberation Sans", sans-serif' font-size="12.24" fill="#f2f2f2" textLength="30.41" lengthAdjust="spacingAndGlyphs">Break</text>
<text x="1839.27" y="889.4" font-family='"Liberation Sans", sans-serif' font-size="12.24" fill="#f2f2f2" textLength="56.63" lengthAdjust="spacingAndGlyphs">Loop Body</text>
<text x="1818.34" y="916.5" font-family='"Liberation Sans", sans-serif' font-size="12.24" fill="#f2f2f2" textLength="74.36" lengthAdjust="spacingAndGlyphs">Array Element</text>
<text x="1832.9" y="942.9" font-family='"Liberation Sans", sans-serif' font-size="12.24" fill="#f2f2f2" textLength="59.8" lengthAdjust="spacingAndGlyphs">Array Index</text>
<text x="1837.64" y="969.5" font-family='"Liberation Sans", sans-serif' font-size="12.24" fill="#f2f2f2" textLength="58.26" lengthAdjust="spacingAndGlyphs">Completed</text>
<text x="1995.25" y="1011.4" font-family='"Liberation Sans", sans-serif' font-size="12.24" fill="#f2f2f2" textLength="79.35" lengthAdjust="spacingAndGlyphs">Flee Alert Tags</text>
<text x="2212" y="988.2" font-family='"Liberation Sans", sans-serif' font-size="27.54" font-weight="bold" fill="#ffffff" fill-opacity="0.58" textLength="112.7" lengthAdjust="spacingAndGlyphs">CONTAINS</text>
<text x="2439.9" y="861" font-family='"Liberation Sans", sans-serif' font-size="13.26" font-weight="bold" fill="#f4f4f4" textLength="41.17" lengthAdjust="spacingAndGlyphs">Branch</text>
<text x="2442" y="916.8" font-family='"Liberation Sans", sans-serif' font-size="12.24" fill="#f2f2f2" textLength="51.28" lengthAdjust="spacingAndGlyphs">Condition</text>
<text x="2528.63" y="890" font-family='"Liberation Sans", sans-serif' font-size="12.24" fill="#f2f2f2" textLength="23.77" lengthAdjust="spacingAndGlyphs">True</text>
<text x="2523.96" y="917.6" font-family='"Liberation Sans", sans-serif' font-size="12.24" fill="#f2f2f2" textLength="28.44" lengthAdjust="spacingAndGlyphs">False</text>
</g>
<g id="L-overlay" opacity="0.999">
<g opacity="0.17"><text x="3150" y="1847.4" font-family='"Liberation Sans", sans-serif' font-size="99.45" font-weight="bold" fill="#ffffff" textLength="434.6" lengthAdjust="spacingAndGlyphs" stroke="#fff" stroke-width="2.2" stroke-linejoin="round">BLUEPRINT</text></g>
<rect x="0" y="0" width="110" height="1874" fill="url(#vl)"/>
<rect x="3487" y="0" width="110" height="1874" fill="url(#vr)"/>
<rect x="0" y="1774" width="3597" height="100" fill="url(#vb)"/>
</g>
</svg>
</body></html>
